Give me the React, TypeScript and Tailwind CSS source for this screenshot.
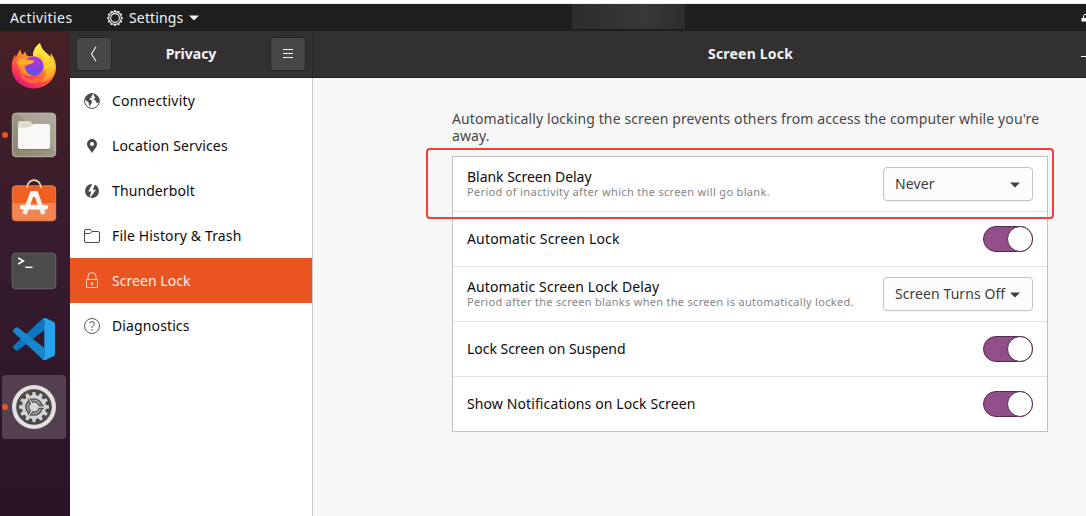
import type { ReactNode } from "react";

const sans = "font-['Noto_Sans','Open_Sans',sans-serif]";

function FirefoxIcon() {
  return (
    <svg width="46" height="47" viewBox="0 0 46 47" className="-mt-[3px]">
      <defs>
        <linearGradient id="fxBody" x1="0.8" y1="0.05" x2="0.25" y2="0.95">
          <stop offset="0" stopColor="#ffe226" />
          <stop offset="0.4" stopColor="#ff9a25" />
          <stop offset="0.72" stopColor="#ff4a45" />
          <stop offset="1" stopColor="#e3167f" />
        </linearGradient>
        <linearGradient id="fxFlame" x1="0.5" y1="0" x2="0.6" y2="1">
          <stop offset="0" stopColor="#fff14a" />
          <stop offset="0.6" stopColor="#ffd032" />
          <stop offset="1" stopColor="#ff8a25" />
        </linearGradient>
        <radialGradient id="fxGlobe" cx="0.6" cy="0.2" r="0.9">
          <stop offset="0" stopColor="#b833e1" />
          <stop offset="0.5" stopColor="#8440dd" />
          <stop offset="1" stopColor="#5462df" />
        </radialGradient>
      </defs>
      <path d="M9.5 7.5C9.7 9.8 10.4 11.5 11.6 12.7L14.5 9.2C14.4 11.3 15.2 13 16.7 14.2L22 14C22 8 25 4 29 1C29.6 5 31.5 7.5 34.5 10.3C37 12.5 38.5 14 39.5 16.5L39.8 11C43.2 15.5 45 20 45 24.7C45 37 35.2 46.4 23 46.4C10.2 46.4.7 37 .7 25C.7 19.6 2 15.6 4.5 12.5L4.6 16.5C5.7 13 7.3 10 9.5 7.5Z" fill="url(#fxBody)" />
      <path d="M22 14C22 8 25 4 29 1C29.6 5 31.5 7.5 34.5 10.3C41.7 16 45 22 43.5 29C42 36.5 34.5 40.5 27 39.5C34 36 35 25 30.5 19C28 16 25 15.5 22 14Z" fill="url(#fxFlame)" />
      <circle cx="22.8" cy="24" r="9.8" fill="url(#fxGlobe)" />
      <path d="M9 24C9 34.5 17 38.5 24 36.5C29 35.5 33 31 34.5 27C37 34 31 41 23 41.5C13.5 42 7 34.5 9 24Z" fill="#ff6a35" opacity=".85" />
      <path d="M5.5 21C8 16.5 12 15.3 15.2 17.2C17 18.2 20 18.4 23 18.7C23.6 20.6 20.7 21.4 18.2 22.3C16.2 23.2 15.8 24.2 13.5 24.5C14.5 29 16.5 32 21.5 33.8C14.5 35 9.5 31 8 25C7.5 23.5 7 22 5.5 21Z" fill="#ff8e2b" />
      <path d="M5.5 20.5C8 16.5 12 15.3 15.2 17.2C17 18.2 20 18.4 23 18.7C22.5 21 20.7 21.4 18.2 22.3C14.5 21.5 10.5 22 8 24C7.6 22.5 7 21.5 5.5 20.5Z" fill="#ffae28" />
      <path d="M27 15.5C32 17.5 34.5 22 33 28C38 22.5 35 14 27 12.5Z" fill="#ffcb2e" />
    </svg>
  );
}

function FilesIcon() {
  return (
    <svg width="46" height="46" viewBox="0 0 46 46">
      <defs>
        <linearGradient id="flBg" x1="0" y1="1" x2="1" y2="0">
          <stop offset="0" stopColor="#89836f" />
          <stop offset="0.55" stopColor="#9d9787" />
          <stop offset="0.56" stopColor="#a8a294" />
          <stop offset="1" stopColor="#b1ac9e" />
        </linearGradient>
      </defs>
      <rect x="1" y="1.5" width="44" height="44" rx="4" fill="#6d6858" />
      <rect x="1.3" y="1" width="43.4" height="43.4" rx="4" fill="url(#flBg)" stroke="#c9c5ba" strokeWidth=".7" />
      <path d="M7 17V11.2Q7 9 9 9H18Q20 9 21 11L22 13V17Z" fill="#dedbd0" />
      <path d="M7 15.8Q14 15.8 18.5 15.3Q21 12 24 12H36.5Q39 12 39 14.2V34.5Q39 37 36.5 37H9.5Q7 37 7 34.5Z" fill="#f9f8f7" />
      <path d="M8 37.5H38" stroke="#706b5c" strokeWidth=".7" />
    </svg>
  );
}

function SoftwareIcon() {
  return (
    <svg width="46" height="46" viewBox="0 0 46 46" className="-mt-[5px]">
      <rect x="1.3" y="7.8" width="43.4" height="35" rx="3.5" fill="#ef6023" stroke="#f58a5e" strokeWidth=".8" />
      <path d="M1.5 25H44.5V39Q44.5 42.5 41 42.5H5Q1.5 42.5 1.5 39Z" fill="#f48553" />
      <path d="M16 10C16 -.5 30 -.5 30 10" fill="none" stroke="#f0d9a5" strokeWidth="1.7" />
      <path d="M13.5 36L21 15.5H25L32.5 36" fill="none" stroke="#f8efe9" strokeWidth="4.6" />
      <path d="M20.5 13.3H25.5L27.5 19H18.5Z" fill="#fff" />
      <rect x="9" y="27" width="28" height="4.6" rx="2.3" fill="#fff" />
    </svg>
  );
}

function TerminalIcon() {
  return (
    <svg width="46" height="46" viewBox="0 0 46 46">
      <rect x="1.2" y="5.2" width="43.6" height="35.6" rx="3.5" fill="#4b4b4b" stroke="#6f6b6f" strokeWidth=".9" />
      <path d="M7.2 10L12.5 13L7.2 16" fill="none" stroke="#fff" strokeWidth="1.5" />
      <path d="M14.3 19.3H21.5" stroke="#fff" strokeWidth="1.5" />
    </svg>
  );
}

function CodeIcon() {
  return (
    <svg width="46" height="46" viewBox="0 0 46 46">
      <path d="M2.5 29.7Q1.2 31 2.6 32.4L4.6 34.3Q5.8 35.3 7.2 34.3L33.5 14V3Q32.5 2 31.2 3Z" fill="#0b76bd" />
      <path d="M2.5 16.3Q1.2 15 2.6 13.6L4.6 11.7Q5.8 10.7 7.2 11.7L33.5 32V43Q32.5 44 31.2 43Z" fill="#1686ce" />
      <path d="M33 2.2Q34 1.8 35 2.3L42.5 5.8Q44 6.6 44 8.2V37.8Q44 39.4 42.5 40.2L35 43.7Q33 44.5 31.5 43Q33.3 43.4 33.3 41.2V4.8Q33.3 2.6 31.5 3Z" fill="#26a2ee" />
    </svg>
  );
}

const teeth = [0, 30, 60, 90, 120, 150, 180, 210, 240, 270, 300, 330];

function SettingsIcon() {
  return (
    <svg width="46" height="46" viewBox="0 0 46 46">
      <circle cx="23" cy="23" r="22" fill="#e3e1df" />
      <circle cx="23" cy="23" r="17.8" fill="#4b4a49" />
      {teeth.map((a) => (
        <path key={a} d="M20.8 13L21.6 8H24.4L25.2 13Z" fill="#d6d4d2" transform={`rotate(${a} 23 23)`} />
      ))}
      <circle cx="23" cy="23" r="10.4" fill="none" stroke="#d6d4d2" strokeWidth="3.2" />
      <circle cx="23" cy="23" r="6.6" fill="none" stroke="#a5a3a1" strokeWidth="1.6" />
      <path d="M23 23H33M23 23L18 31.6M23 23L18 14.4" stroke="#4b4a49" strokeWidth="3.4" />
      <circle cx="23" cy="23" r="4.6" fill="#d9d7d5" />
      <path d="M23 23H33M23 23L18 31.6M23 23L18 14.4" stroke="#d6d4d2" strokeWidth="1.4" />
    </svg>
  );
}

function GlobeIcon() {
  return (
    <svg width="16" height="16" viewBox="0 0 16 16">
      <circle cx="8" cy="8" r="7.4" fill="#fff" stroke="#4a4a4a" strokeWidth="1" />
      <path d="M2 3.2Q4.5.3 8 .7L8.8 2L7.2 3.3L7.7 4.6L6 5.2L5.4 6.5L7.3 7.3L8.3 9.2L6.8 11L6 13.5L4.8 11.5L4.5 9L2.2 7.8L1 6.2Z" fill="#4a4a4a" />
      <path d="M10.2 1.3Q14.6 2.8 15.2 7.2L14.3 10.6L12.3 9.5L11.9 7.8L10.4 7.2L10.2 5.2L11.6 4.2L9.8 3Z" fill="#4a4a4a" />
    </svg>
  );
}

function PinIcon() {
  return (
    <svg width="16" height="16" viewBox="0 0 16 16">
      <path fillRule="evenodd" d="M8 1A5 5 0 0 1 13 6C13 9 10.7 10.8 8 15C5.3 10.8 3 9 3 6A5 5 0 0 1 8 1ZM8 3.9A2 2 0 1 0 8 7.9A2 2 0 1 0 8 3.9Z" fill="#4a4a4a" />
    </svg>
  );
}

function BoltIcon() {
  return (
    <svg width="16" height="16" viewBox="0 0 16 16">
      <circle cx="8" cy="8" r="7" fill="#4a4a4a" />
      <path d="M8.8 0L4.3 8.5H7.2L5.2 16L12 6.8H8.8L11.5 0Z" fill="#fff" />
    </svg>
  );
}

function FolderIcon() {
  return (
    <svg width="16" height="16" viewBox="0 0 16 16" fill="none" stroke="#4a4a4a">
      <path d="M.5 3Q.5 1.5 2 1.5H6Q7 1.5 7.5 2.5L8 3.5H14Q15.5 3.5 15.5 5V13Q15.5 14.5 14 14.5H2Q.5 14.5.5 13Z" />
      <path d="M.5 5.5H5.5Q7 5.5 8 3.5" />
    </svg>
  );
}

function LockIcon() {
  return (
    <svg width="16" height="17" viewBox="0 0 16 17" fill="none" stroke="#fbd0bf">
      <path d="M2.5 7.5H13.5V15.5H2.5Z" />
      <path d="M4 7.5V4.5A4 4 0 0 1 12 4.5V7.5" />
      <path d="M8 10.3V13.2" strokeWidth="1.8" />
    </svg>
  );
}

function HelpIcon() {
  return (
    <svg width="16" height="16" viewBox="0 0 16 16" fill="none" stroke="#4a4a4a">
      <circle cx="8" cy="8" r="7.5" strokeWidth=".9" />
      <path d="M5.8 5.3Q5.9 3.6 8 3.6Q10.3 3.6 10.3 5.6Q10.3 6.7 9 7.6Q8 8.3 8 9.8" />
      <path d="M8 11.2V12.6" strokeWidth="1.2" />
    </svg>
  );
}

function TopGearIcon() {
  return (
    <svg width="16" height="16" viewBox="0 0 16 16" fill="none" stroke="#f2f2f2">
      <circle cx="8" cy="8" r="6.4" strokeWidth="1.1" />
      <circle cx="8" cy="8" r="4.4" strokeWidth="1.1" />
      {teeth.map((a) => (
        <path key={a} d="M8 .1V1.6" strokeWidth="1.7" transform={`rotate(${a} 8 8)`} />
      ))}
    </svg>
  );
}

function Caret({ className }: { className: string }) {
  return (
    <svg width="10" height="6" viewBox="0 0 10 6" className={className}>
      <path d="M0 .5H10L5 5.5Z" fill="currentColor" />
    </svg>
  );
}

function DockItem({ children, running, active }: { children: ReactNode; running?: boolean; active?: boolean }) {
  return (
    <div className={`relative ml-0.5 flex h-16 w-16 shrink-0 items-center justify-center rounded ${active ? "bg-[#54404f]" : ""}`}>
      {running && <span className="absolute top-[29px] left-0 h-1.5 w-1.5 rounded-full bg-[#e95420]" />}
      {children}
    </div>
  );
}

function NavItem({ icon, label, active, spacing }: { icon: ReactNode; label: string; active?: boolean; spacing: string }) {
  return (
    <div className={`flex h-[45px] items-center gap-3 pl-3.5 ${active ? "bg-[#e95420] text-[#fdeee8]" : "text-[#0c0c0c]"}`}>
      <span className="flex w-4 justify-center">{icon}</span>
      <span className={`whitespace-nowrap ${spacing}`}>{label}</span>
    </div>
  );
}

function Toggle() {
  return (
    <div className="flex h-[26px] w-[50px] justify-end rounded-full border border-[#532a4f] bg-[#924d8b]">
      <span className="-my-px -mr-px h-[26px] w-[26px] rounded-full border border-[#532a4f] bg-white" />
    </div>
  );
}

function Select({ value, spacing }: { value: string; spacing: string }) {
  return (
    <div className="flex h-[34px] w-[150px] items-center justify-between rounded-[4px] border border-[#c4c4c4] bg-[#fcfcfc] pr-3 pl-[11px] text-[#3d3d3d] shadow-[0_1px_1px_rgba(0,0,0,0.05)]">
      <span className={`pb-0.5 whitespace-nowrap ${spacing}`}>{value}</span>
      <Caret className="mt-px text-[#3d3d3d]" />
    </div>
  );
}

function Row({ title, spacing, note, noteSpacing, children }: { title: string; spacing: string; note?: string; noteSpacing?: string; children: ReactNode }) {
  return (
    <div className="flex h-[55px] items-center justify-between border-b border-[#e1e1e1] px-3.5 last:h-[54px] last:border-b-0">
      <div className="pb-0.5 text-[#0c0c0c]">
        <div className={`leading-[17px] whitespace-nowrap ${spacing}`}>{title}</div>
        {note && <div className={`text-[11px] leading-[14px] whitespace-nowrap text-[#858585] ${noteSpacing}`}>{note}</div>}
      </div>
      {children}
    </div>
  );
}

export default function App() {
  return (
    <div className={`flex h-[516px] w-[1086px] flex-col overflow-hidden bg-white text-[14px] ${sans}`}>
      <div className="h-1 shrink-0 border-b border-[#f0f0f0] bg-white" />
      <header className="flex h-[27px] shrink-0 items-center bg-[#1e1e1e] pl-2.5 text-[#f2f2f2]">
        <span className="w-[97px] tracking-[0.42px]">Activities</span>
        <TopGearIcon />
        <span className="ml-1.5 w-[60px] tracking-[0.15px]">Settings</span>
        <Caret className="text-[#f2f2f2]" />
        <span className="ml-[373px] h-[25px] w-[113px] self-start bg-linear-to-r from-[#2b2d2c] via-[#383838] via-65% to-[#2d2c2b]" />
        <svg width="5" height="8" viewBox="0 0 5 8" className="ml-auto">
          <path d="M.5 4H5V7.5H.5Z" fill="#fff" />
          <path d="M2.5 4V1.5Q2.5.5 5 .5" fill="none" stroke="#fff" />
        </svg>
      </header>

      <div className="flex min-h-0 flex-1">
        <nav className="flex w-[70px] shrink-0 flex-col gap-1 bg-linear-to-b from-[#462024] via-[#371b2e] via-45% to-[#291426] pt-1">
          <DockItem><FirefoxIcon /></DockItem>
          <DockItem running><FilesIcon /></DockItem>
          <DockItem><SoftwareIcon /></DockItem>
          <DockItem><TerminalIcon /></DockItem>
          <DockItem><CodeIcon /></DockItem>
          <DockItem running active><SettingsIcon /></DockItem>
        </nav>

        <aside className="flex w-[243px] shrink-0 flex-col border-r border-[#c8c8c8] bg-white">
          <div className="-mr-px flex h-[47px] shrink-0 items-center justify-between border-r border-b border-[#201f20] border-r-[#272526] bg-[#333031] pr-[7px] pl-1.5 text-[#f4f4f4]">
            <span className="flex h-[34px] w-[36px] items-center justify-center rounded-[4px] border border-[#272526] bg-[#484746]">
              <svg width="8" height="16" viewBox="0 0 8 16" fill="none" stroke="#f4f4f4" strokeWidth="1.1">
                <path d="M6 .8L1.5 8L6 15.2" />
              </svg>
            </span>
            <span className="pb-0.5 font-bold">Privacy</span>
            <span className="-mr-px flex h-[34px] w-[36px] items-center justify-center rounded-[4px] border border-[#272526] bg-[#484746]">
              <svg width="10" height="9" viewBox="0 0 10 9" stroke="#f4f4f4" className="-mt-px">
                <path d="M0 .5H10M0 4.5H10M0 8.5H10" />
              </svg>
            </span>
          </div>
          <NavItem icon={<GlobeIcon />} label="Connectivity" spacing="tracking-[0.18px]" />
          <NavItem icon={<PinIcon />} label="Location Services" spacing="tracking-[0.15px]" />
          <NavItem icon={<BoltIcon />} label="Thunderbolt" spacing="tracking-[0.1px]" />
          <NavItem icon={<FolderIcon />} label="File History & Trash" spacing="tracking-[0.15px]" />
          <NavItem icon={<LockIcon />} label="Screen Lock" active spacing="tracking-[0.04px]" />
          <NavItem icon={<HelpIcon />} label="Diagnostics" spacing="tracking-[0.12px]" />
        </aside>

        <section className="flex flex-1 flex-col bg-[#f7f7f7]">
          <div className="flex h-[47px] shrink-0 items-center border-b border-[#201f20] bg-[#333031] text-[#f4f4f4]">
            <span className="ml-[395px] pb-0.5 font-bold tracking-[0.2px]">Screen Lock</span>
            <span className="mt-1 ml-auto h-px w-[5px] bg-white" />
          </div>
          <div className="ml-[139px] w-[596px] pt-8">
            <p className="h-[46px] leading-[17px] tracking-[0.118px] whitespace-nowrap text-[#474747]">
              Automatically locking the screen prevents others from access the computer while you're
              <br />
              away.
            </p>
            <div className="relative border border-[#c0c0c0] bg-white">
              <div className="absolute -top-[9px] -left-[27px] h-[71px] w-[628px] rounded-[4px] border-2 border-[#f53d3d]" />
              <Row title="Blank Screen Delay" spacing="tracking-[-0.03px]" note="Period of inactivity after which the screen will go blank." noteSpacing="tracking-[0.33px]">
                <Select value="Never" spacing="tracking-[0.1px]" />
              </Row>
              <Row title="Automatic Screen Lock" spacing="tracking-[0.17px]"><Toggle /></Row>
              <Row title="Automatic Screen Lock Delay" spacing="tracking-[0.1px]" note="Period after the screen blanks when the screen is automatically locked." noteSpacing="tracking-[0.3px]">
                <Select value="Screen Turns Off" spacing="tracking-[0.07px]" />
              </Row>
              <Row title="Lock Screen on Suspend" spacing="tracking-[-0.03px]"><Toggle /></Row>
              <Row title="Show Notifications on Lock Screen" spacing="tracking-[0.11px]"><Toggle /></Row>
            </div>
          </div>
        </section>
      </div>
    </div>
  );
}
